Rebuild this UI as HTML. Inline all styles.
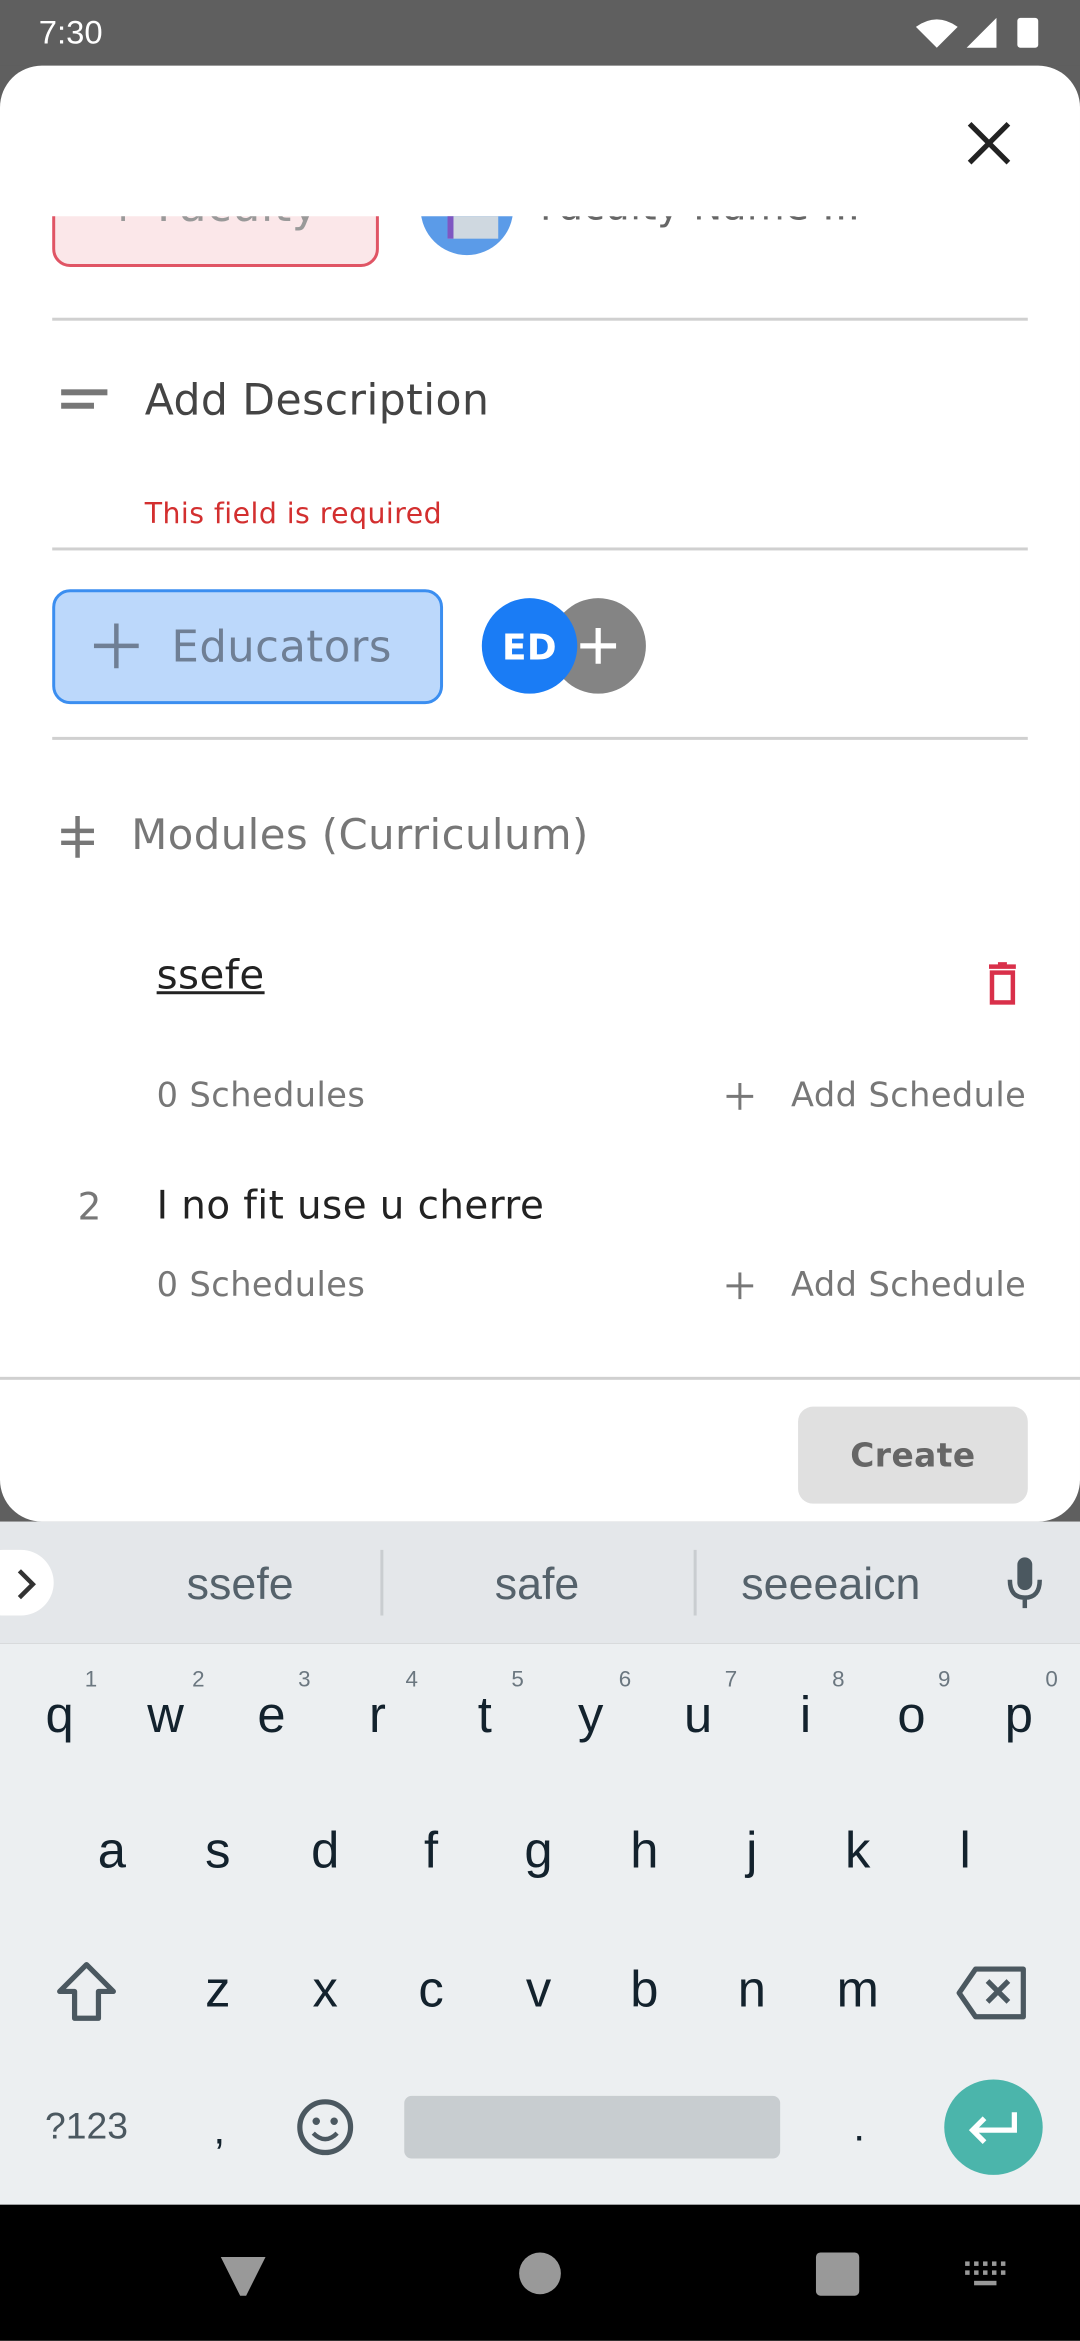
<!DOCTYPE html>
<html><head><meta charset="utf-8"><style>
html,body{margin:0;padding:0;width:1080px;height:2340px;overflow:hidden;background:#5f5f5f}
#w{position:absolute;left:0;top:0;width:724px;height:1569px;transform:scale(1.49171);transform-origin:0 0;font-family:"Liberation Sans",sans-serif}
.a{position:absolute}
.c{position:absolute;transform:translate(-50%,-50%);white-space:nowrap;line-height:1}
.l{position:absolute;transform:translateY(-50%);white-space:nowrap;line-height:1}
.sheet .l,.sheet .c{font-family:"DejaVu Sans",sans-serif;letter-spacing:0.3px}
.hr{position:absolute;height:2px;background:#d0d0d0}
.k{position:absolute;transform:translate(-50%,-50%);font-size:34px;color:#13222d;line-height:1}
.n{position:absolute;transform:translate(-50%,-50%);font-size:15px;color:#6b7780;line-height:1}
</style></head><body><div id="w">
<div class="a" style="left:0;top:0;width:724px;height:44px;background:#5f5f5f"></div>
<div class="l" style="left:26px;top:22px;font-size:22px;color:#fff">7:30</div>
<svg class="a" style="left:612px;top:10px" width="90" height="24" viewBox="0 0 90 24"><path d="M2 8 Q16 -2 30 8 L16 22Z" fill="#fff"/><path d="M36 22 L56 2 L56 22Z" fill="#fff"/><rect x="70" y="2" width="14" height="20" rx="2" fill="#fff"/></svg>
<div class="a sheet" style="left:0;top:44px;width:724px;height:976px;background:#fff;border-radius:28px;overflow:hidden">
 <svg class="a" style="left:647px;top:36px" width="32" height="32" viewBox="0 0 32 32"><path d="M3 3L29 29M29 3L3 29" stroke="#222" stroke-width="3.5"/></svg>
 <div class="a" style="left:0;top:101px;width:724px;height:60px;overflow:hidden">
  <div class="a" style="left:35px;top:-28px;width:215px;height:58px;border:2px solid #e05565;border-radius:12px;background:#fbe7e9"></div>
  <div class="l" style="left:70px;top:-6px;font-size:30px;color:#999">+ Faculty</div>
  <div class="a" style="left:282px;top:-36px;width:62px;height:62px;border-radius:50%;background:#5b9be8"></div>
  <div class="a" style="left:300px;top:-20px;width:30px;height:35px;background:#cfd8e0;border-left:4px solid #7e57c2"></div>
  <div class="l" style="left:362px;top:-6px;font-size:26px;color:#666">Faculty Name ...</div>
 </div>
 <div class="hr" style="left:35px;top:169px;width:654px"></div>
 <div class="a" style="left:41px;top:217px;width:31px;height:4px;background:#777"></div>
 <div class="a" style="left:41px;top:226px;width:22px;height:4px;background:#777"></div>
 <div class="l" style="left:97px;top:225px;font-size:28.5px;color:#444">Add Description</div>
 <div class="l" style="left:97px;top:301px;font-size:19px;color:#d32f2f">This field is required</div>
 <div class="hr" style="left:35px;top:323px;width:654px"></div>
 <div class="a" style="left:35px;top:351px;width:258px;height:73px;border:2px solid #3b8ef0;border-radius:12px;background:#bcd8fb"></div>
 <svg class="a" style="left:61px;top:372px" width="34" height="34" viewBox="0 0 34 34"><path d="M17 2V32M2 17H32" stroke="#6f7f95" stroke-width="3"/></svg>
 <div class="l" style="left:115px;top:390px;font-size:29px;color:#6f7f95">Educators</div>
 <div class="a" style="left:369px;top:357px;width:64px;height:64px;border-radius:50%;background:#848484"></div>
 <svg class="a" style="left:388px;top:376px" width="26" height="26" viewBox="0 0 26 26"><path d="M13 1V25M1 13H25" stroke="#fff" stroke-width="3.5"/></svg>
 <div class="a" style="left:323px;top:357px;width:64px;height:64px;border-radius:50%;background:#1a7cf5"></div>
 <div class="c" style="left:355px;top:390px;font-size:24px;color:#fff;font-weight:bold">ED</div>
 <div class="hr" style="left:35px;top:450px;width:654px"></div>
 <svg class="a" style="left:40px;top:501px" width="24" height="32" viewBox="0 0 24 32"><path d="M1 12H23M1 20H23M12 2V30" stroke="#777" stroke-width="3"/></svg>
 <div class="l" style="left:88px;top:516px;font-size:28px;color:#777">Modules (Curriculum)</div>
 <div class="l" style="left:105px;top:610px;font-size:27px;color:#222;text-decoration:underline">ssefe</div>
 <svg class="a" style="left:660px;top:600px" width="24" height="30" viewBox="0 0 24 30"><path d="M3 4H21" stroke="#d9304a" stroke-width="3"/><rect x="9" y="1" width="6" height="3" fill="#d9304a"/><rect x="5" y="8" width="14" height="20" fill="none" stroke="#d9304a" stroke-width="3"/></svg>
 <div class="l" style="left:105px;top:691px;font-size:22.5px;color:#777">0 Schedules</div>
 <svg class="a" style="left:487px;top:682px" width="18" height="18" viewBox="0 0 18 18"><path d="M9 0V18M0 9H18" stroke="#777" stroke-width="2"/></svg>
 <div class="l" style="right:36px;top:691px;font-size:22.5px;color:#777">Add Schedule</div>
 <div class="l" style="left:52px;top:765px;font-size:25px;color:#777">2</div>
 <div class="l" style="left:105px;top:765px;font-size:26px;color:#222">I no fit use u cherre</div>
 <div class="l" style="left:105px;top:818px;font-size:22.5px;color:#777">0 Schedules</div>
 <svg class="a" style="left:487px;top:809px" width="18" height="18" viewBox="0 0 18 18"><path d="M9 0V18M0 9H18" stroke="#777" stroke-width="2"/></svg>
 <div class="l" style="right:36px;top:818px;font-size:22.5px;color:#777">Add Schedule</div>
 <div class="hr" style="left:0;top:879px;width:724px"></div>
 <div class="a" style="left:535px;top:899px;width:154px;height:65px;background:#e0e0e0;border-radius:10px"></div>
 <div class="c" style="left:612px;top:933px;font-size:22px;color:#666;font-weight:bold">Create</div>
</div>
<div class="a" style="left:0;top:1020px;width:724px;height:82px;background:#e4e7ea"></div>
<div class="a" style="left:-20px;top:1039px;width:56px;height:44px;border-radius:22px;background:#fff"></div>
<svg class="a" style="left:10px;top:1050px" width="16" height="24" viewBox="0 0 16 24"><path d="M3 3L12 12L3 21" stroke="#333" stroke-width="3" fill="none"/></svg>
<div class="c" style="left:161px;top:1063px;font-size:30px;color:#55626b">ssefe</div>
<div class="a" style="left:255px;top:1039px;width:2px;height:44px;background:#c9cdd0"></div>
<div class="c" style="left:360px;top:1063px;font-size:30px;color:#55626b">safe</div>
<div class="a" style="left:465px;top:1039px;width:2px;height:44px;background:#c9cdd0"></div>
<div class="c" style="left:557px;top:1063px;font-size:30px;color:#55626b">seeeaicn</div>
<svg class="a" style="left:674px;top:1043px" width="26" height="36" viewBox="0 0 26 36"><rect x="8" y="1" width="10" height="22" rx="5" fill="#4b5860"/><path d="M3 16Q3 28 13 28Q23 28 23 16M13 28V35" stroke="#4b5860" stroke-width="3" fill="none"/></svg>
<div class="a" style="left:0;top:1102px;width:724px;height:376px;background:#eceff1"></div>
<div class="k" style="left:40px;top:1150px">q</div><div class="n" style="left:61px;top:1126px">1</div>
<div class="k" style="left:111px;top:1150px">w</div><div class="n" style="left:133px;top:1126px">2</div>
<div class="k" style="left:182px;top:1150px">e</div><div class="n" style="left:204px;top:1126px">3</div>
<div class="k" style="left:253px;top:1150px">r</div><div class="n" style="left:276px;top:1126px">4</div>
<div class="k" style="left:325px;top:1150px">t</div><div class="n" style="left:347px;top:1126px">5</div>
<div class="k" style="left:396px;top:1150px">y</div><div class="n" style="left:419px;top:1126px">6</div>
<div class="k" style="left:468px;top:1150px">u</div><div class="n" style="left:490px;top:1126px">7</div>
<div class="k" style="left:540px;top:1150px">i</div><div class="n" style="left:562px;top:1126px">8</div>
<div class="k" style="left:611px;top:1150px">o</div><div class="n" style="left:633px;top:1126px">9</div>
<div class="k" style="left:683px;top:1150px">p</div><div class="n" style="left:705px;top:1126px">0</div>
<div class="k" style="left:75px;top:1241px">a</div><div class="k" style="left:146px;top:1241px">s</div><div class="k" style="left:218px;top:1241px">d</div><div class="k" style="left:289px;top:1241px">f</div><div class="k" style="left:361px;top:1241px">g</div><div class="k" style="left:432px;top:1241px">h</div><div class="k" style="left:504px;top:1241px">j</div><div class="k" style="left:575px;top:1241px">k</div><div class="k" style="left:647px;top:1241px">l</div>
<svg class="a" style="left:36px;top:1314px" width="44" height="42" viewBox="0 0 44 42"><path d="M22 3L40 21H30V39H14V21H4Z" fill="none" stroke="#4b5860" stroke-width="3.5" stroke-linejoin="round"/></svg>
<div class="k" style="left:146px;top:1334px">z</div><div class="k" style="left:218px;top:1334px">x</div><div class="k" style="left:289px;top:1334px">c</div><div class="k" style="left:361px;top:1334px">v</div><div class="k" style="left:432px;top:1334px">b</div><div class="k" style="left:504px;top:1334px">n</div><div class="k" style="left:575px;top:1334px">m</div>
<svg class="a" style="left:640px;top:1318px" width="50" height="36" viewBox="0 0 50 36"><path d="M14 2H46V34H14L3 18Z" fill="none" stroke="#4b5860" stroke-width="3.5" stroke-linejoin="round"/><path d="M22 10L36 24M36 10L22 24" stroke="#4b5860" stroke-width="3.5"/></svg>
<div class="c" style="left:58px;top:1426px;font-size:25px;color:#4b5860">?123</div>
<div class="c" style="left:147px;top:1428px;font-size:28px;color:#13222d">,</div>
<svg class="a" style="left:198px;top:1406px" width="40" height="40" viewBox="0 0 40 40"><circle cx="20" cy="20" r="17" fill="none" stroke="#4b5860" stroke-width="3.5"/><circle cx="14" cy="16" r="2.5" fill="#4b5860"/><circle cx="26" cy="16" r="2.5" fill="#4b5860"/><path d="M12 24Q20 32 28 24" stroke="#4b5860" stroke-width="3" fill="none"/></svg>
<div class="a" style="left:271px;top:1405px;width:252px;height:42px;background:#c8cdd0;border-radius:5px"></div>
<div class="c" style="left:576px;top:1426px;font-size:28px;color:#13222d">.</div>
<div class="a" style="left:633px;top:1394px;width:66px;height:64px;border-radius:50%;background:#4bb5ab"></div>
<svg class="a" style="left:646px;top:1410px" width="40" height="32" viewBox="0 0 40 32"><path d="M34 6V18H6M14 10L6 18L14 26" stroke="#fff" stroke-width="3.5" fill="none"/></svg>
<div class="a" style="left:0;top:1478px;width:724px;height:91px;background:#000"></div>
<svg class="a" style="left:147px;top:1511px" width="32" height="30" viewBox="0 0 32 30"><path d="M1 2H31L18 28H14Z" fill="#999"/></svg>
<div class="a" style="left:348px;top:1510px;width:28px;height:28px;border-radius:50%;background:#999"></div>
<div class="a" style="left:547px;top:1510px;width:29px;height:29px;border-radius:3px;background:#999"></div>
<svg class="a" style="left:645px;top:1514px" width="32" height="26" viewBox="0 0 32 26"><g fill="#999"><rect x="2" y="2" width="3" height="3"/><rect x="8" y="2" width="3" height="3"/><rect x="14" y="2" width="3" height="3"/><rect x="20" y="2" width="3" height="3"/><rect x="26" y="2" width="3" height="3"/><rect x="2" y="8" width="3" height="3"/><rect x="8" y="8" width="3" height="3"/><rect x="14" y="8" width="3" height="3"/><rect x="20" y="8" width="3" height="3"/><rect x="26" y="8" width="3" height="3"/><rect x="8" y="15" width="15" height="3"/></g></svg>
</div></body></html>
